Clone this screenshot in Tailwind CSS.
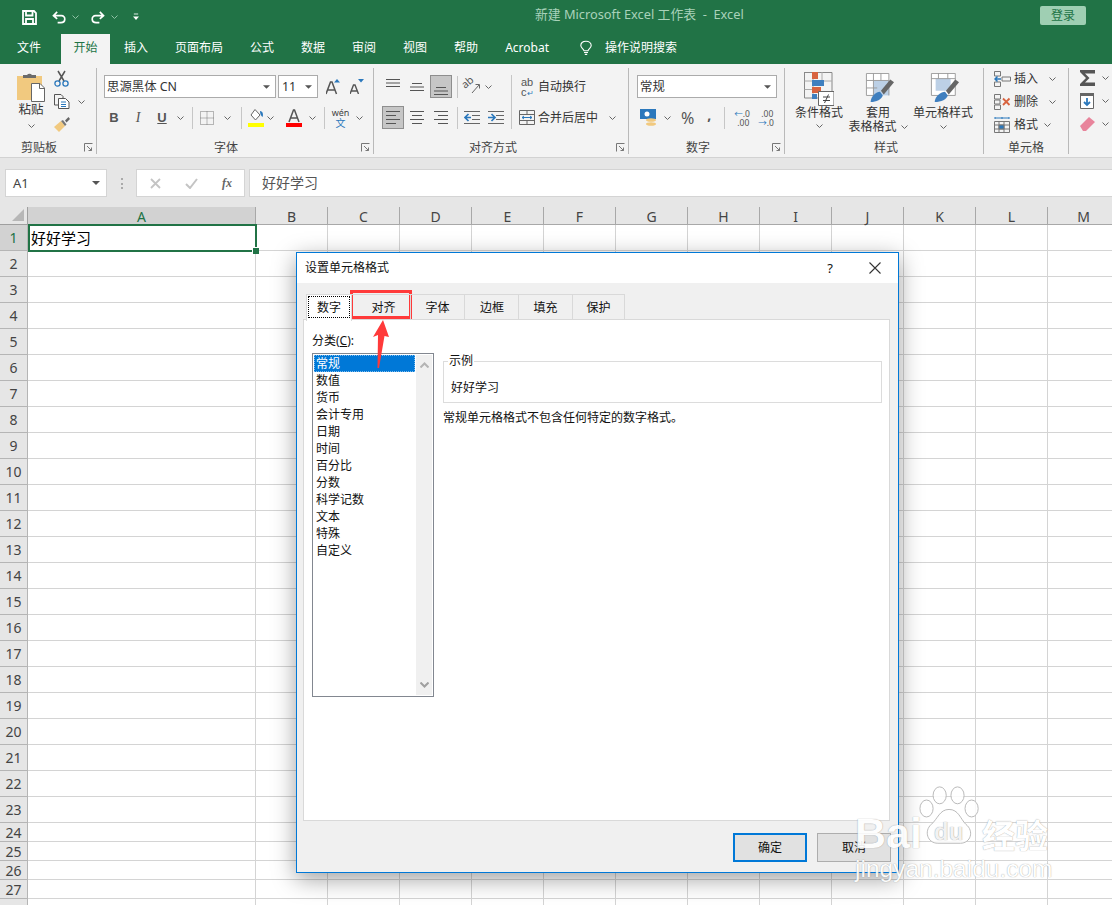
<!DOCTYPE html>
<html lang="zh-CN">
<head>
<meta charset="utf-8">
<title>新建 Microsoft Excel 工作表 - Excel</title>
<script src="https://cdn.jsdelivr.net/npm/@tailwindcss/browser@4"></script>
</head>
<body class="m-0">
<svg class="hidden"><defs>
<symbol id="chev" viewBox="0 0 7 4"><path d="M.5.500 3.500 3.500 6.500.5" fill="none" stroke="#666" stroke-width="1"/></symbol>
<symbol id="chevw" viewBox="0 0 7 4"><path d="M.5.500 3.500 3.500 6.500.5" fill="none" stroke="#8fc2a5" stroke-width="1"/></symbol>
<symbol id="launch" viewBox="0 0 9 9"><path d="M.5 8.500V.5H8.500M3 3 7.500 7.500M4.500 7.500H7.500V4.500" fill="none" stroke="#777"/></symbol>
<symbol id="drop" viewBox="0 0 8 4"><path d="M0 0H8L4 4Z" fill="#555"/></symbol>
</defs></svg>
<div class="relative w-[1112px] h-[905px] overflow-hidden bg-white text-[12px] leading-[16px] text-[#333] font-['Noto_Sans','Noto_Sans_CJK_SC',sans-serif]">

<!-- title bar -->
<header class="h-[34px] bg-[#217346] flex items-start text-white">
  <div class="w-[535px] h-full flex items-center pl-[22px]">
    <svg width="15" height="15" viewBox="0 0 15 15" fill="none" stroke="#fff" stroke-width="1.800"><path d="M1 1H12L14 3V14H1ZM4 1V5.500H10.500V1M4 14V9H11V14"/></svg>
    <svg class="ml-[15px]" width="15" height="13" viewBox="0 0 16 14" fill="none" stroke="#fff" stroke-width="1.800"><path d="M5.500 1 1.500 5 5.500 8.500M1.500 5H10C15 5 15 12.500 9.500 12.500H6"/></svg>
    <svg class="ml-[5px]" width="7" height="4"><use href="#chevw"/></svg>
    <svg class="ml-[11px]" width="15" height="13" viewBox="0 0 16 14" fill="none" stroke="#fff" stroke-width="1.800"><path d="M10.500 1 14.500 5 10.500 8.500M14.500 5H6C1 5 1 12.500 6.500 12.500H10"/></svg>
    <svg class="ml-[6px]" width="7" height="4"><use href="#chevw"/></svg>
    <svg class="ml-[15px]" width="6" height="8" viewBox="0 0 7 8"><path d="M1 .5H6" stroke="#fff"/><path d="M0 3.500H7L3.500 7.500Z" fill="#fff"/></svg>
  </div>
  <div class="flex-1 h-[28px] flex items-center text-[12.800px] whitespace-pre text-[#a9d2ba]">新建 Microsoft Excel 工作表  -  Excel</div>
  <div class="mt-[6px] mr-[26px] w-[46px] h-[19px] rounded-[2px] bg-[#9fcfb3] text-[#217346] text-center text-[12px] leading-[19px]">登录</div>
</header>

<!-- tabs -->
<nav class="h-[30px] bg-[#217346] flex items-stretch pl-[3px] text-white text-[12px] leading-[28px]">
  <div class="px-[14px]">文件</div>
  <div class="ml-[6px] w-[49px] bg-[#f3f3f3] text-center text-[#217346]">开始</div>
  <div class="px-[14px]">插入</div>
  <div class="px-[13px]">页面布局</div>
  <div class="px-[14px]">公式</div>
  <div class="px-[13px]">数据</div>
  <div class="px-[14px]">审阅</div>
  <div class="px-[13px]">视图</div>
  <div class="px-[14px]">帮助</div>
  <div class="px-[13px]">Acrobat</div>
  <div class="ml-[18px] flex items-center gap-[13px] h-[28px]">
    <svg width="12" height="16" viewBox="0 0 15 19" fill="none" stroke="#fff" stroke-width="1.400"><path d="M5 13C4.500 10.500 1 9.500 1 6.500 1 3 4 1 7.500 1S14 3 14 6.500C14 9.500 10.500 10.500 10 13ZM5 15.200H10M6 17.500H9"/></svg>
    <span>操作说明搜索</span>
  </div>
</nav>

<!-- ribbon -->
<section class="h-[94px] bg-[#f3f3f3] border-b border-[#d2d2d2] flex items-start pt-[4px]">

  <!-- clipboard -->
  <div class="relative w-[97px] h-[86px] border-r border-[#b9b9b9] flex flex-col">
    <div class="flex-1 flex pl-[17px]">
      <div class="w-[28px] flex flex-col items-center">
        <svg class="mt-[5px]" width="28" height="29" viewBox="0 0 28 29"><path d="M0 3H25V27H0Z" fill="#f1c97f"/><path d="M6 5V2H10A3 3 0 0 1 15 2H19V5Z" fill="#6b6b6b"/><path d="M14.500 10.500H23L27.500 15V28.500H14.500Z" fill="#fff" stroke="#666"/><path d="M22.500 10.500V15.500H27.500" fill="none" stroke="#666"/></svg>
        <span class="-mt-[1px] text-[12.500px] leading-[18px] whitespace-nowrap">粘贴</span>
        <svg class="mt-[5px]" width="7" height="4"><use href="#chev"/></svg>
      </div>
      <div class="ml-[9px] flex flex-col">
        <svg class="mt-[2px]" width="15" height="17" viewBox="0 0 15 17" fill="none"><path d="M4 1 10 11M11 1 5 11" stroke="#555" stroke-width="1.500"/><circle cx="3.500" cy="13.500" r="2.600" stroke="#2b78bc" stroke-width="1.300"/><circle cx="11.500" cy="13.500" r="2.600" stroke="#2b78bc" stroke-width="1.300"/></svg>
        <div class="mt-[7px] flex items-center">
          <svg width="16" height="15" viewBox="0 0 16 15" fill="none" stroke="#555"><path d="M.5.500H7L9 2.500V4M.5.500V11H4"/><path d="M4.500 4.500H11.500L15 8V14.500H4.500Z" fill="#fff"/><path d="M7 8H12M7 10.500H12M7 12.500H12" stroke="#2b78bc"/></svg>
          <svg class="ml-[8px]" width="7" height="4"><use href="#chev"/></svg>
        </div>
        <svg class="mt-[8px]" width="16" height="15" viewBox="0 0 16 15"><path d="M0 10 7 4 11 9 5 15Z" fill="#f1c97f"/><path d="M7 4 11 9 12.500 7.500 9 3Z" fill="#777"/><path d="M11 3.500 14.500 0 16 2 12.500 5.500Z" fill="#666"/></svg>
      </div>
    </div>
    <div class="h-[14px] pl-[21px] text-[12px] leading-[16px] text-[#444]">剪贴板</div>
    <svg class="absolute right-[3px] bottom-[2px]" width="9" height="9"><use href="#launch"/></svg>
  </div>

  <!-- font -->
  <div class="relative w-[277px] h-[86px] border-r border-[#b9b9b9] flex flex-col">
    <div class="flex-1 pl-[7px]">
      <div class="mt-[7px] h-[23px] flex items-center">
        <div class="w-[172px] h-full bg-white border border-[#ababab] flex items-center pl-[2px] pr-[5px] justify-between text-[12.400px]">
          <span>思源黑体 CN</span><svg width="7" height="4"><use href="#drop"/></svg>
        </div>
        <div class="ml-[2px] w-[40px] h-full bg-white border border-[#ababab] flex items-center pl-[3px] pr-[5px] justify-between text-[12.400px]">
          <span>11</span><svg width="7" height="4"><use href="#drop"/></svg>
        </div>
        <svg class="ml-[8px]" width="14" height="16" viewBox="0 0 14 16"><path d="M0 15 4.500 3H6L10.500 15M2 11H8.500" fill="none" stroke="#555" stroke-width="1.500"/><path d="M8 3.500 11 0 14 3.500Z" fill="#2b78bc"/></svg>
        <svg class="ml-[10px]" width="14" height="15" viewBox="0 0 14 15"><path d="M0 15 3.500 6H5L8.500 15M1.500 12H7" fill="none" stroke="#555" stroke-width="1.400"/><path d="M8 0H14L11 3.500Z" fill="#2b78bc"/></svg>
      </div>
      <div class="mt-[8px] h-[23px] flex items-center font-['Liberation_Sans',sans-serif] text-[#555]">
        <span class="w-[22px] -ml-[1px] text-center font-bold text-[13px]">B</span>
        <span class="w-[26px] text-center italic text-[14px] font-['Liberation_Serif',serif]">I</span>
        <span class="w-[22px] text-center underline font-bold text-[13px]">U</span>
        <svg class="ml-[4px]" width="7" height="4"><use href="#chev"/></svg>
        <div class="ml-[8px] h-[22px] border-l border-[#c6c6c6]"></div>
        <svg class="ml-[7px]" width="14" height="14" viewBox="0 0 14 14" fill="none" stroke="#777" stroke-dasharray="1 1"><path d="M.5.500H13.500V13.500H.5ZM7 .5V13.500M.5 7H13.500"/></svg>
        <svg class="ml-[10px]" width="7" height="4"><use href="#chev"/></svg>
        <div class="ml-[10px] h-[22px] border-l border-[#c6c6c6]"></div>
        <svg class="ml-[6px]" width="16" height="19" viewBox="0 0 16 19"><path d="M3 7 7 1.500 12 7 7.500 12Z" fill="#fff" stroke="#666"/><path d="M12 3C15 3 15.500 7 14.500 9 13 8 12 6 12 3Z" fill="#2b78bc"/><path d="M0 15H16V19H0Z" fill="#ffff00"/></svg>
        <svg class="ml-[3px]" width="7" height="4"><use href="#chev"/></svg>
        <svg class="ml-[12px]" width="16" height="18" viewBox="0 0 16 18"><path d="M3 13 7.500 1H8.500L13 13M4.500 9H11.500" fill="none" stroke="#555" stroke-width="1.500"/><path d="M0 14H16V18H0Z" fill="#ff0000"/></svg>
        <svg class="ml-[7px]" width="7" height="4"><use href="#chev"/></svg>
        <div class="ml-[8px] h-[22px] border-l border-[#c6c6c6]"></div>
        <div class="ml-[7px] w-[17px] flex flex-col items-center font-['Noto_Sans','Noto_Sans_CJK_SC',sans-serif]"><span class="h-[11px] leading-[11px] text-[9px] text-[#444]">wén</span><span class="h-[11px] leading-[11px] text-[10px] text-[#2b78bc]">文</span></div>
        <svg class="ml-[7px]" width="7" height="4"><use href="#chev"/></svg>
      </div>
    </div>
    <div class="h-[14px] text-center pr-[18px] text-[#444]">字体</div>
    <svg class="absolute right-[3px] bottom-[2px]" width="9" height="9"><use href="#launch"/></svg>
  </div>

  <!-- alignment -->
  <div class="relative w-[255px] h-[86px] border-r border-[#b9b9b9] flex flex-col">
    <div class="flex-1 pl-[8px]">
      <div class="mt-[7px] h-[23px] flex items-center">
        <svg class="ml-[4px] -mt-[8px]" width="14" height="8" viewBox="0 0 14 8" stroke="#555"><path d="M0 .5H14M0 4H14M0 7.500H14"/></svg>
        <svg class="ml-[10px]" width="14" height="8" viewBox="0 0 14 8" stroke="#555"><path d="M2 .5H12M0 4H14M0 7.500H14"/></svg>
        <div class="ml-[6px] w-[22px] h-[23px] bg-[#c6c6c6] border border-[#8e8e8e] flex items-end justify-center pb-[2px]"><svg width="14" height="8" viewBox="0 0 14 8" stroke="#555"><path d="M2 .5H12M0 4H14M0 7.500H14"/></svg></div>
        <div class="ml-[5px] h-[22px] border-l border-[#c6c6c6]"></div>
        <svg class="ml-[6px] overflow-visible" width="16" height="15" viewBox="0 0 16 15" fill="none"><text transform="translate(1 10) rotate(-40)" font-size="10.500" fill="#555" font-family="Noto Sans">ab</text><path d="M8 14 15 6M11.500 5.500H15.500V9.500" stroke="#666"/></svg>
        <svg class="ml-[5px]" width="7" height="4"><use href="#chev"/></svg>
        <div class="ml-[19px] h-[54px] self-start border-l border-[#c6c6c6]"></div>
        <div class="ml-[9px] w-[13px] flex flex-col text-[11px] text-[#555] font-['Liberation_Sans',sans-serif]"><span class="h-[9px] leading-[9px]">ab</span><span class="h-[8px] leading-[8px] mt-[1px] whitespace-nowrap">c<span class="text-[#2b78bc] text-[8px]">↵</span></span></div>
        <span class="ml-[4px] text-[12px]">自动换行</span>
      </div>
      <div class="mt-[8px] h-[23px] flex items-center">
        <div class="w-[22px] h-[23px] bg-[#c6c6c6] border border-[#8e8e8e] flex items-center justify-center"><svg width="14" height="13" viewBox="0 0 14 13" stroke="#555"><path d="M0 .5H14M0 4.500H10M0 8.500H14M0 12.500H10"/></svg></div>
        <svg class="ml-[6px]" width="14" height="13" viewBox="0 0 14 13" stroke="#555"><path d="M0 .5H14M2 4.500H12M0 8.500H14M2 12.500H12"/></svg>
        <svg class="ml-[10px]" width="14" height="13" viewBox="0 0 14 13" stroke="#555"><path d="M0 .5H14M4 4.500H14M0 8.500H14M4 12.500H14"/></svg>
        <div class="ml-[9px] h-[22px] border-l border-[#c6c6c6]"></div>
        <svg class="ml-[6px]" width="16" height="13" viewBox="0 0 16 13" stroke="#666"><path d="M0 .5H16M8 4.500H16M8 8.500H16M0 12.500H16"/><path d="M4.500 3 1 6.500 4.500 10M1 6.500H7" fill="none" stroke="#2b78bc" stroke-width="1.700"/></svg>
        <svg class="ml-[8px]" width="16" height="13" viewBox="0 0 16 13" stroke="#666"><path d="M0 .5H16M8 4.500H16M8 8.500H16M0 12.500H16"/><path d="M3.500 3 7 6.500 3.500 10M0 6.500H7" fill="none" stroke="#2b78bc" stroke-width="1.700"/></svg>
        <svg class="ml-[15px]" width="16" height="15" viewBox="0 0 16 15" fill="none" stroke="#666"><path d="M.5.500H15.500V14.500H.5ZM.5 4.500H15.500M.5 10.500H15.500M8 .5V4.500M8 10.500V14.500"/><path d="M3 7.500H13M5 6 3 7.500 5 9M11 6 13 7.500 11 9" stroke="#2b78bc"/></svg>
        <span class="ml-[3px] text-[12px]">合并后居中</span>
        <svg class="ml-[11px]" width="7" height="4"><use href="#chev"/></svg>
      </div>
    </div>
    <div class="h-[14px] text-center pr-[16px] text-[#444]">对齐方式</div>
    <svg class="absolute right-[3px] bottom-[2px]" width="9" height="9"><use href="#launch"/></svg>
  </div>

  <!-- number -->
  <div class="relative w-[156px] h-[86px] border-r border-[#b9b9b9] flex flex-col">
    <div class="flex-1 pl-[8px]">
      <div class="mt-[7px] w-[140px] h-[23px] bg-white border border-[#ababab] flex items-center pl-[2px] pr-[5px] justify-between text-[12.400px]">
        <span>常规</span><svg width="7" height="4"><use href="#drop"/></svg>
      </div>
      <div class="mt-[8px] h-[23px] flex items-center">
        <svg class="ml-[3px]" width="17" height="17" viewBox="0 0 17 17"><path d="M0 0H16V10H0Z" fill="#2b78bc"/><circle cx="7" cy="5" r="2.500" fill="#fff"/><ellipse cx="11" cy="11" rx="5" ry="1.800" fill="#f1c97f"/><ellipse cx="11" cy="15" rx="5" ry="1.800" fill="#f1c97f"/></svg>
        <svg class="ml-[7px]" width="7" height="4"><use href="#chev"/></svg>
        <span class="ml-[10px] text-[16px] text-[#555]">%</span>
        <span class="ml-[13px] font-bold text-[14px] text-[#555] -mt-[5px]">,</span>
        <div class="ml-[13px] h-[22px] border-l border-[#c6c6c6]"></div>
        <div class="ml-[9px] w-[15px] text-[8.500px] leading-[9px] text-[#555] whitespace-nowrap"><span class="text-[#2b78bc]">←</span>.0<br><span class="ml-[3px]">.00</span></div>
        <div class="ml-[9px] w-[15px] text-[8.500px] leading-[9px] text-[#555] whitespace-nowrap"><span class="ml-[3px]">.00</span><br><span class="text-[#2b78bc]">→</span>.0</div>
      </div>
    </div>
    <div class="h-[14px] text-center pr-[17px] text-[#444]">数字</div>
    <svg class="absolute right-[3px] bottom-[2px]" width="9" height="9"><use href="#launch"/></svg>
  </div>

  <!-- styles -->
  <div class="w-[199px] h-[86px] border-r border-[#b9b9b9] flex flex-col">
    <div class="flex-1 flex">
      <div class="w-[68px] flex flex-col items-center">
        <svg class="mt-[4px]" width="30" height="34" viewBox="0 0 30 34" fill="none"><path d="M0 .5H28V26H14M.5 0V26H14" stroke="#888"/><path d="M.5 9H28M.5 17.500H14M9 0V26M18 0V14" stroke="#aaa"/><path d="M8 0H14V7H8Z" fill="#d8633f"/><path d="M8 8H20V14H8Z" fill="#3f7fbf"/><path d="M8 15H17V21H8Z" fill="#d8633f"/><path d="M8 22H13V27H8Z" fill="#3f7fbf"/><path d="M14.500 19.500H30V33.500H14.500Z" fill="#fff" stroke="#666"/><path d="M19 25H26M19 28.500H26M24.500 22.500 20.500 31" stroke="#444"/></svg>
        <span class="text-[12px] leading-[14px] mt-[0px]">条件格式</span>
        <svg class="mt-[4px]" width="7" height="4"><use href="#chev"/></svg>
      </div>
      <div class="w-[62px] -ml-[6px] flex flex-col items-center">
        <svg class="mt-[5px] ml-[4px]" width="30" height="29" viewBox="0 0 30 31" fill="none"><path d="M0 0H25V24H0Z" fill="#fff"/><path d="M8 8H25V24H8Z" fill="#bcd0e6"/><path d="M.5.500H24.500V24M.5.500V24H12M.5 8H24.500M.5 16H12M8 .5V24M16 .5V8" stroke="#999"/><path d="M5 31C5 25 11 20 15 20L18 24C17 28 11 31 5 31Z" fill="#3f7fbf"/><path d="M16 19 26 7 30 10 19 23Z" fill="#666"/></svg>
        <span class="text-[12px] leading-[14px] mt-[4px]">套用</span>
        <span class="text-[12px] leading-[14px] whitespace-nowrap flex items-center gap-[4px]">表格格式<svg width="7" height="4"><use href="#chev"/></svg></span>
      </div>
      <div class="w-[68px] flex flex-col items-center">
        <svg class="mt-[5px] ml-[4px]" width="30" height="29" viewBox="0 0 30 31" fill="none"><path d="M.5.500H26V24H.5Z" fill="#fff" stroke="#999"/><path d="M5 6H21V19H5Z" fill="#bcd0e6"/><path d="M.5 6H26M8 0V6M18 0V6" stroke="#999"/><path d="M4 31C4 25 11 20 15 20L18 24C17 28 11 31 4 31Z" fill="#3f7fbf"/><path d="M16 19 26 7 30 10 19 23Z" fill="#666"/></svg>
        <span class="text-[12px] leading-[14px] mt-[4px] whitespace-nowrap">单元格样式</span>
        <svg class="mt-[5px]" width="7" height="4"><use href="#chev"/></svg>
      </div>
    </div>
    <div class="h-[14px] text-center text-[#444] pl-[4px]">样式</div>
  </div>

  <!-- cells -->
  <div class="w-[85px] h-[86px] border-r border-[#b9b9b9] flex flex-col">
    <div class="flex-1 pl-[10px] pt-[3px] flex flex-col gap-[7px] text-[12px]">
      <div class="h-[16px] flex items-center"><svg width="17" height="16" viewBox="0 0 17 16" fill="none" stroke="#777"><path d="M.5.500H6.500V5H.5ZM.5 11H6.500V15.500H.5ZM8 6H16.500V10H8Z"/><path d="M7 8H1M3.500 5.500 1 8 3.500 10.500" stroke="#2b78bc" stroke-width="1.500"/></svg><span class="ml-[3px] whitespace-nowrap">插入</span><svg class="ml-[11px]" width="7" height="4"><use href="#chev"/></svg></div>
      <div class="h-[16px] flex items-center"><svg width="17" height="16" viewBox="0 0 17 16" fill="none" stroke="#777"><path d="M.5.500H6.500V5H.5ZM.5 11H6.500V15.500H.5ZM.5 6H6V10H.5Z"/><path d="M9 4.500 15.500 11M15.500 4.500 9 11" stroke="#d8633f" stroke-width="1.800"/></svg><span class="ml-[3px] whitespace-nowrap">删除</span><svg class="ml-[11px]" width="7" height="4"><use href="#chev"/></svg></div>
      <div class="h-[16px] flex items-center"><svg width="17" height="16" viewBox="0 0 17 16" fill="none" stroke="#777"><path d="M.5 4.500H15.500V15.500H.5ZM.5 8H15.500M.5 12H15.500M5 4.500V15.500M10 4.500V15.500"/><path d="M5 8H10V12H5Z" fill="#2b78bc"/><path d="M1 1H15M1 0V2M15 0V2M8 0V2" stroke="#2b78bc"/></svg><span class="ml-[3px] whitespace-nowrap">格式</span><svg class="ml-[6px]" width="7" height="4"><use href="#chev"/></svg></div>
    </div>
    <div class="h-[14px] text-center text-[#444]">单元格</div>
  </div>

  <!-- editing -->
  <div class="flex-1 h-[86px] pl-[11px] flex flex-col">
    <div class="h-[19px] flex items-center"><svg width="16" height="16" viewBox="0 0 16 16"><path d="M0 0H15V3.500H5L9.500 8 5 12.500H15V16H0V14L6 8 0 2Z" fill="#555"/></svg><svg class="ml-[6px]" width="7" height="4"><use href="#chev"/></svg></div>
    <div class="mt-[4px] h-[19px] flex items-center"><svg width="14" height="16" viewBox="0 0 14 16"><path d="M.5.500H13.500V15.500H.5Z" fill="#fff" stroke="#666"/><path d="M0 0H14V3H0Z" fill="#666"/><path d="M7 5V12M4 9 7 12 10 9" fill="none" stroke="#2b78bc" stroke-width="1.800"/></svg><svg class="ml-[8px]" width="7" height="4"><use href="#chev"/></svg></div>
    <div class="mt-[4px] h-[19px] flex items-center"><svg width="15" height="14" viewBox="0 0 15 14"><path d="M0 9 9 0 15 5 6 14H3Z" fill="#e8849b"/></svg><svg class="ml-[7px]" width="7" height="4"><use href="#chev"/></svg></div>
  </div>
</section>

<!-- formula bar -->
<div class="h-[49px] bg-[#e6e6e6] flex items-start pt-[11px] pl-[5px]">
  <div class="w-[102px] h-[28px] bg-white border border-[#d4d4d4] flex items-center justify-between pl-[7px] pr-[6px] text-[13px] text-[#444]"><span>A1</span><svg width="8" height="4"><use href="#drop"/></svg></div>
  <div class="ml-[14px] w-[3px] mt-[9px] h-[11px] border-l-2 border-dotted border-[#aaa]"></div>
  <div class="ml-[12px] w-[109px] h-[28px] bg-white border border-[#d4d4d4] flex items-center pl-[13px]">
    <svg width="11" height="11" viewBox="0 0 11 11" stroke="#c4c4c4" stroke-width="1.800"><path d="M1 1 10 10M10 1 1 10"/></svg>
    <svg class="ml-[24px]" width="13" height="11" viewBox="0 0 13 11" fill="none" stroke="#c4c4c4" stroke-width="2"><path d="M1 6 5 10 12 1"/></svg>
    <span class="ml-[24px] italic font-bold text-[12px] text-[#666] font-['Liberation_Serif',serif]">fx</span>
  </div>
  <div class="ml-[4px] flex-1 h-[28px] bg-white border-y border-l border-[#d4d4d4] pl-[12px] text-[14px] leading-[25px] text-[#555]">好好学习</div>
</div>

<!-- sheet -->
<main id="sheet" class="grid grid-cols-[28px_228px_repeat(12,72px)] grid-rows-[18px_repeat(23,26px)_repeat(4,19px)_19px] text-[#444]"></main>

<!-- dialog -->
<div class="absolute left-[296px] top-[252px] w-[603px] h-[621px] border border-[#0078d7] bg-[#f0f0f0] shadow-[0_6px_22px_rgba(0,0,0,0.38)] flex flex-col text-[#111] text-[12px]">
  <div class="h-[30px] bg-white flex items-center pl-[8px] pr-[17px]">
    <span class="flex-1">设置单元格格式</span>
    <span class="text-[13px] mr-[36px]">?</span>
    <svg width="12" height="12" viewBox="0 0 12 12" stroke="#333" stroke-width="1.100"><path d="M.5.500 11.500 11.500M11.500.5.500 11.500"/></svg>
  </div>
  <div class="flex-1 flex flex-col px-[6px] pt-[11px]">
    <div class="h-[26px] flex pl-[3px] relative z-10 -mb-px leading-[26px] text-center">
      <div class="w-[46px] h-[27px] bg-white border-x border-t border-[#d9d9d9] p-px"><div class="h-[22px] leading-[22px] border border-dotted border-black">数字</div></div>
      <div class="w-[59px] h-[26px] border-t border-r border-b border-[#d9d9d9] pl-[5px]">对齐</div>
      <div class="w-[54px] h-[26px] border-t border-r border-b border-[#d9d9d9]">字体</div>
      <div class="w-[54px] h-[26px] border-t border-r border-b border-[#d9d9d9] pl-[1px]">边框</div>
      <div class="w-[54px] h-[26px] border-t border-r border-b border-[#d9d9d9]">填充</div>
      <div class="w-[52px] h-[26px] border-t border-r border-b border-[#d9d9d9]">保护</div>
    </div>
    <div class="w-[587px] h-[502px] bg-white border border-[#d9d9d9] flex pl-[8px] pt-[12px]">
      <div class="w-[122px] shrink-0">
        <div class="h-[21px] leading-[17px]">分类(<span class="underline">C</span>):</div>
        <div class="h-[344px] border border-[#828790] flex p-px">
          <ul class="w-[102px] leading-[17px]">
            <li class="h-[17px] w-[101px] bg-[#0078d7] text-white pl-[2px] outline-1 outline-dotted -outline-offset-1 outline-[#7fbcec]">常规</li>
            <li class="h-[17px] pl-[2px]">数值</li>
            <li class="h-[17px] pl-[2px]">货币</li>
            <li class="h-[17px] pl-[2px]">会计专用</li>
            <li class="h-[17px] pl-[2px]">日期</li>
            <li class="h-[17px] pl-[2px]">时间</li>
            <li class="h-[17px] pl-[2px]">百分比</li>
            <li class="h-[17px] pl-[2px]">分数</li>
            <li class="h-[17px] pl-[2px]">科学记数</li>
            <li class="h-[17px] pl-[2px]">文本</li>
            <li class="h-[17px] pl-[2px]">特殊</li>
            <li class="h-[17px] pl-[2px]">自定义</li>
          </ul>
          <div class="flex-1 bg-[#f0f0f0] flex flex-col justify-between items-center py-[7px]">
            <svg width="9" height="6" viewBox="0 0 9 6" fill="none" stroke="#b4b4b4" stroke-width="2"><path d="M.5 5.500 4.500 1.500 8.500 5.500"/></svg>
            <svg width="9" height="6" viewBox="0 0 9 6" fill="none" stroke="#a0a0a0" stroke-width="2"><path d="M.5.500 4.500 4.500 8.500.5"/></svg>
          </div>
        </div>
      </div>
      <div class="ml-[9px] w-[439px] pt-[21px]">
        <fieldset class="h-[50px] border border-[#dcdcdc] px-[4px]">
          <legend class="px-px leading-[16px]">示例</legend>
          <div class="pl-[3px] pt-[11px]">好好学习</div>
        </fieldset>
        <p class="mt-[7px] leading-[16px]">常规单元格格式不包含任何特定的数字格式。</p>
      </div>
    </div>
    <div class="flex-1 flex justify-end items-start pt-[12px] mr-[1px] gap-[10px]">
      <button class="w-[74px] h-[29px] bg-[#e1e1e1] border-2 border-[#0078d7]">确定</button>
      <button class="w-[74px] h-[29px] bg-[#e1e1e1] border border-[#adadad]">取消</button>
    </div>
  </div>
</div>

<!-- annotation: red box and arrow -->
<div class="absolute left-[350px] top-[290px] w-[62px] h-[29px] border-[3px] border-[#ff3a3a]"></div>
<svg class="absolute left-[370px] top-[318px]" width="22" height="52" viewBox="0 0 22 52"><path d="M13 2 19 19 14.500 18 9 50 7.500 50 8 17 3 19Z" fill="#ff3a3a"/></svg>

<!-- watermark -->
<div class="absolute left-[855px] top-[785px] w-[200px] h-[100px] text-white font-['Liberation_Sans',sans-serif] [text-shadow:0_0_1px_rgba(120,120,120,0.9)]">
  <div class="absolute left-0 top-[24px] text-[43px] leading-[48px] font-bold opacity-90">Bai</div>
  <svg class="absolute left-[64px] top-0" width="62" height="62" viewBox="0 0 66 62" fill="#fff" fill-opacity="0.85" stroke="#b5b5b5" stroke-width="1"><ellipse cx="8" cy="23" rx="7" ry="9"/><ellipse cx="22" cy="9" rx="7" ry="9"/><ellipse cx="41" cy="9" rx="7" ry="9"/><ellipse cx="56" cy="23" rx="7" ry="9"/><path d="M32 24C22 24 20 34 13 40 5 47 9 60 20 60H44C55 60 59 47 50 40 44 34 42 24 32 24Z"/></svg>
  <div class="absolute left-[79px] top-[33px] text-[24px] leading-[28px] font-bold text-[#f2f2f2]">du</div>
  <div class="absolute left-[127px] top-[33px] text-[33px] leading-[32px] font-bold font-['Noto_Sans_CJK_SC',sans-serif] whitespace-nowrap opacity-90">经验</div>
  <div class="absolute left-0 top-[69px] text-[24.500px] leading-[30px] whitespace-nowrap font-['Liberation_Sans',sans-serif] opacity-90">jingyan.baidu.com</div>
</div>
</div>

<script>
const sheet = document.getElementById('sheet');
const letters = 'ABCDEFGHIJKLM'.split('');
let html = '<div class="bg-[#e6e6e6] border-b border-r border-[#9f9f9f] flex items-end justify-end pr-[3px] pb-[3px]"><svg width="12" height="12" viewBox="0 0 12 12"><path d="M12 0V12H0Z" fill="#b7b7b7"/></svg></div>';
letters.forEach((l, i) => {
  html += i === 0
    ? '<div class="bg-[#d2d2d2] border-r border-[#a8a8a8] text-center text-[14px] leading-[20px] text-[#217346]">' + l + '</div>'
    : '<div class="bg-[#e6e6e6] border-b border-r border-[#a8a8a8] text-center text-[14px] leading-[20px]">' + l + '</div>';
});
for (let r = 1; r <= 28; r++) {
  const label = r === 28 ? '' : r;
  html += r === 1
    ? '<div class="bg-[#d2d2d2] border-r border-b border-[#b5b5b5] text-center text-[14px] leading-[26px] text-[#217346]">1</div>'
    : '<div class="bg-[#e6e6e6] border-r border-b border-[#b5b5b5] text-center text-[14px] ' + (r <= 23 ? 'leading-[26px]' : 'leading-[19px]') + '">' + label + '</div>';
  letters.forEach((l, i) => {
    html += (r === 1 && i === 0)
      ? '<div class="relative"><div class="absolute left-0 -top-px -right-px -bottom-px border-2 border-[#217346] pl-[1px] text-[15px] leading-[24px] text-black">好好学习<span class="absolute -right-[4px] -bottom-[4px] w-[6px] h-[6px] bg-[#217346] border-l border-t border-white box-content"></span></div></div>'
      : '<div class="border-r border-b border-[#d4d4d4]"></div>';
  });
}
sheet.innerHTML = html;
</script>
</body>
</html>
